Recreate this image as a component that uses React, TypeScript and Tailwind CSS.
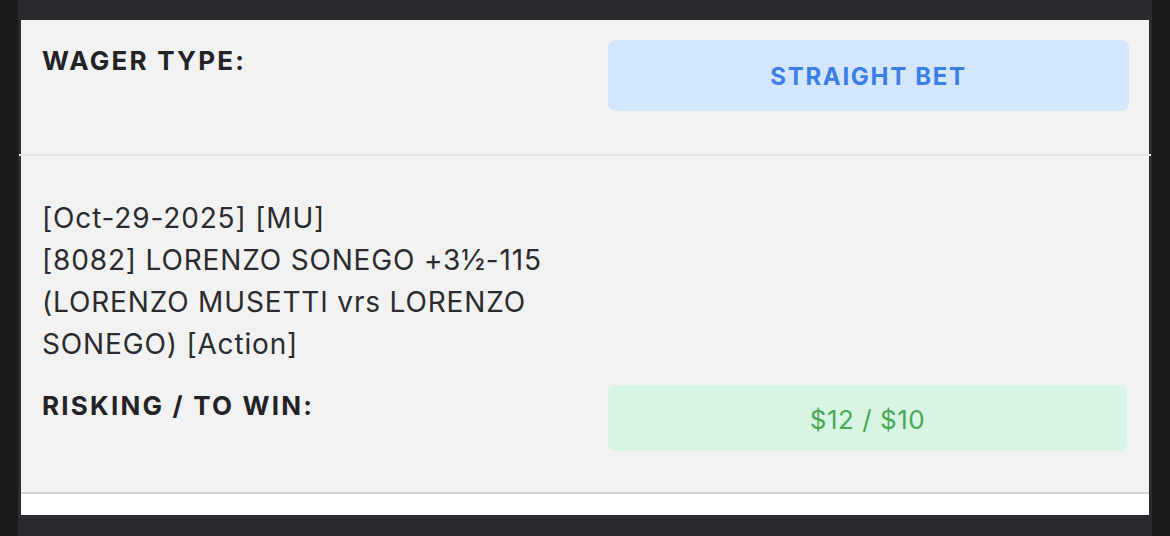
import React from 'react';

const App: React.FC = () => {
  return (
    <div className="min-h-[536px] w-full bg-[#1b1b1b] font-['Inter','Liberation_Sans',sans-serif]">
      <div className="ml-[18px] w-[1134px] bg-[#2a2b2e] px-[3px] pt-[20px] pb-[21px]">
        <div className="bg-[#f2f2f2]">
          {/* wager type */}
          <div className="flex pl-[21px] pr-[20px] pt-[20px] pb-[43px]">
            <div className="flex-1 text-[26px] leading-[42px] font-bold tracking-[0.085em] text-[#232327]">
              WAGER TYPE:
            </div>
            <div className="w-[521px] h-[71px] rounded-[8px] bg-[#d3e6fb] flex items-center justify-center pt-[2px] text-[24px] font-bold tracking-[0.07em] text-[#3b7fe6]">
              STRAIGHT BET
            </div>
          </div>
          <div className="-mx-[2px] h-[2px] bg-[#e6e6e6]" />

          {/* selection */}
          <div className="pl-[21px] pr-[22px] pt-[41px] pb-[41px]">
            <div className="w-[548px] text-[28px] leading-[42px] tracking-[0.03em] text-[#2b2b2f]">
              [Oct-29-2025] [MU]
              <br />
              [8082] LORENZO SONEGO +3½-115
              <br />
              (LORENZO MUSETTI vrs LORENZO SONEGO) [Action]
            </div>
            <div className="mt-[20px] flex">
              <div className="flex-1 text-[26px] leading-[42px] font-bold tracking-[0.085em] text-[#232327]">
                RISKING / TO WIN:
              </div>
              <div className="w-[519px] h-[66px] rounded-[8px] bg-[#d8f5e4] flex items-center justify-center pt-[2px] text-[26px] tracking-[0.02em] text-[#4aa857]">
                $12 / $10
              </div>
            </div>
          </div>
          <div className="h-[2px] bg-[#d4d4d4]" />
          <div className="h-[21px] bg-white" />
        </div>
      </div>
    </div>
  );
};

export default App;
